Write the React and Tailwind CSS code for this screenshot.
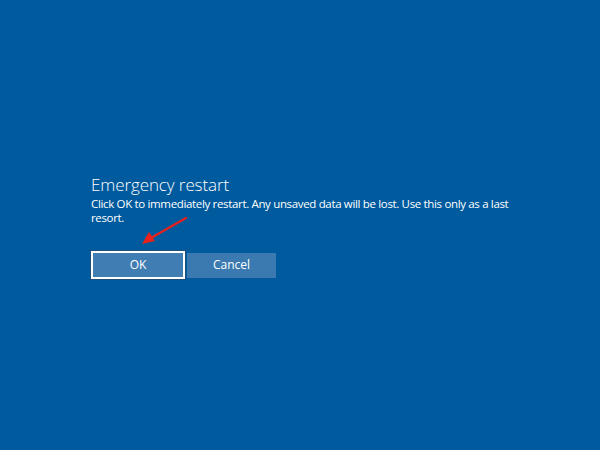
export default function App() {
  return (
    <div
      className="relative w-[600px] h-[450px] bg-[#005a9e] text-white overflow-hidden"
      style={{ fontFamily: '"Open Sans", "Noto Sans", sans-serif' }}
    >
      <div className="pt-[174px] pl-[91px] w-[520px]">
        <h1 className="text-[17px] leading-[22px] font-light tracking-[-0.1px]">Emergency restart</h1>
        <p className="text-[11.5px] leading-[14px] mt-[1px] tracking-[-0.34px]">
          Click OK to immediately restart. Any unsaved data will be lost. Use this only as a last resort.
        </p>
        <div className="flex gap-[2px] mt-[26px] items-center">
          <button className="w-[94px] h-[28px] border-2 border-white bg-[#3f7db3] text-[12px] outline outline-1 outline-[#1d4f7a]">
            OK
          </button>
          <button className="w-[89px] h-[25px] bg-[#3a7ab0] text-[12px]">Cancel</button>
        </div>
      </div>
      <svg className="absolute left-0 top-0" width="600" height="450">
        <line x1="186" y1="218" x2="151" y2="238" stroke="#e8211d" strokeWidth="2.2" strokeLinecap="round" />
        <polygon points="142,244 149,232 155,241" fill="#e8211d" />
      </svg>
    </div>
  );
}
